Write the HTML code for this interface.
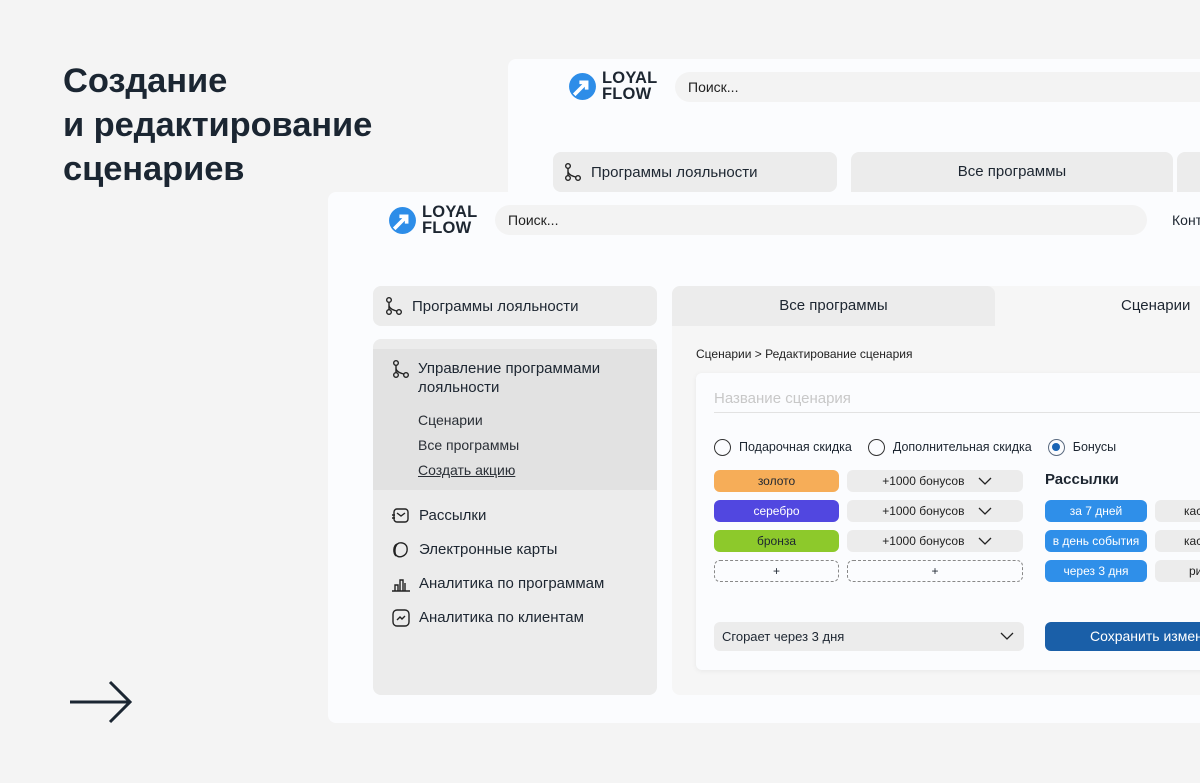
<!DOCTYPE html>
<html><head><meta charset="utf-8"><style>
*{box-sizing:border-box;margin:0;padding:0}
body{width:1200px;height:783px;overflow:hidden;background:#f4f4f4;font-family:"Liberation Sans","DejaVu Sans",sans-serif;color:#1d2631;position:relative}
.a{position:absolute}
h1{position:absolute;left:63px;top:59px;font-size:34.5px;line-height:44px;font-weight:600;color:#1b2632;letter-spacing:-0.1px}
.panel{background:#fbfcfe;border-radius:8px}
.search{background:#f3f3f3;border-radius:16px;font-size:14px;padding-left:13px;line-height:30px;color:#222}
.logo{display:flex;align-items:center;gap:5px}
.logo .t{font-size:16.5px;font-weight:700;line-height:16px;letter-spacing:0.2px;color:#1d2631}
.card{background:#ececec;border-radius:8px;font-size:15px}
.row{display:flex;align-items:center;gap:8px}
.pill{position:absolute;height:22px;border-radius:6px;font-size:12px;text-align:center;line-height:22px}
.g{background:#ececec;color:#222}
.b{background:#2f8fe9;color:#fff}
.dash{border:1px dashed #888;background:none;line-height:20px}
.radio{display:inline-block;width:17px;height:17px;border:1.5px solid #333;border-radius:50%;vertical-align:middle;margin-right:8px;position:relative}
</style></head><body>
<h1>Создание<br>и редактирование<br>сценариев</h1>
<svg class="a" style="left:68px;top:680px" width="66" height="44" viewBox="0 0 66 44"><path d="M2 22H62M42 2L62 22L42 42" stroke="#1b2632" stroke-width="3" fill="none"/></svg>

<!-- back panel -->
<div class="a panel" style="left:508px;top:59px;width:720px;height:140px"></div>
<div class="a logo" style="left:568px;top:70px"><svg width="29" height="29" viewBox="0 0 28 28"><circle cx="14" cy="14" r="13" fill="#2d8de8"/><path d="M6 22L17 11M11 10H18V17" stroke="#fff" stroke-width="3.5" fill="none"/></svg><div class="t">LOYAL<br>FLOW</div></div>
<div class="a search" style="left:675px;top:72px;width:540px;height:30px">Поиск...</div>
<div class="a card row" style="left:553px;top:152px;width:284px;height:40px;padding-left:10px;background:#ececec"><svg width="20" height="20" viewBox="0 0 20 20" fill="none" stroke="#222" stroke-width="1.4"><circle cx="5" cy="4" r="2.3"/><circle cx="5" cy="16" r="2.3"/><circle cx="15" cy="16" r="2.3"/><path d="M5 6.3V13.7M5 9Q5 13 12.7 15"/></svg>Программы лояльности</div>
<div class="a card" style="left:851px;top:152px;width:322px;height:40px;text-align:center;line-height:40px;border-radius:8px 8px 0 0">Все программы</div>
<div class="a card" style="left:1177px;top:152px;width:40px;height:40px;border-radius:8px 8px 0 0"></div>

<!-- front panel -->
<div class="a panel" style="left:328px;top:192px;width:900px;height:531px"></div>
<div class="a logo" style="left:388px;top:204px"><svg width="29" height="29" viewBox="0 0 28 28"><circle cx="14" cy="14" r="13" fill="#2d8de8"/><path d="M6 22L17 11M11 10H18V17" stroke="#fff" stroke-width="3.5" fill="none"/></svg><div class="t">LOYAL<br>FLOW</div></div>
<div class="a search" style="left:495px;top:205px;width:652px;height:30px">Поиск...</div>
<div class="a" style="left:1172px;top:212px;font-size:14px">Конт</div>

<div class="a card row" style="left:373px;top:286px;width:284px;height:40px;padding-left:11px"><svg width="20" height="20" viewBox="0 0 20 20" fill="none" stroke="#222" stroke-width="1.4"><circle cx="5" cy="4" r="2.3"/><circle cx="5" cy="16" r="2.3"/><circle cx="15" cy="16" r="2.3"/><path d="M5 6.3V13.7M5 9Q5 13 12.7 15"/></svg>Программы лояльности</div>

<div class="a card" style="left:373px;top:339px;width:284px;height:356px;overflow:hidden">
 <div style="background:#e2e2e2;height:141px;margin-top:10px;padding:10px 0 0 18px;position:relative">
  <svg class="a" style="left:18px;top:10px" width="20" height="20" viewBox="0 0 20 20" fill="none" stroke="#222" stroke-width="1.4"><circle cx="5" cy="4" r="2.3"/><circle cx="5" cy="16" r="2.3"/><circle cx="15" cy="16" r="2.3"/><path d="M5 6.3V13.7M5 9Q5 13 12.7 15"/></svg>
  <div style="margin-left:27px;line-height:19px">Управление программами<br>лояльности</div>
  <div style="margin-left:27px;font-size:14px;line-height:25px;margin-top:11px;color:#2a2f36">Сценарии<br>Все программы<br><span style="text-decoration:underline">Создать акцию</span></div>
 </div>
 <div style="padding:9px 0 0 18px;line-height:34px">
  <div class="row" style="gap:8px"><svg width="20" height="18" viewBox="0 0 20 18" fill="none" stroke="#222" stroke-width="1.4"><rect x="3" y="2" width="14" height="13" rx="3"/><path d="M6 6L10 9L14 6M1 8H4M1 11H4"/></svg>Рассылки</div>
  <div class="row"><svg width="20" height="18" viewBox="0 0 20 18" fill="none" stroke="#222" stroke-width="1.4"><path d="M8 2C13 1 17 4 16 10C15 15 9 17 6 15C3 13 3 4 8 2Z"/><path d="M6 3C2 5 2 12 5 15"/></svg>Электронные карты</div>
  <div class="row"><svg width="20" height="18" viewBox="0 0 20 18" fill="none" stroke="#222" stroke-width="1.4"><path d="M1 16H19M4 16V10H7V16M9 16V5H12V16M14 16V8"/></svg>Аналитика по программам</div>
  <div class="row"><svg width="20" height="18" viewBox="0 0 20 18" fill="none" stroke="#222" stroke-width="1.4"><rect x="2" y="1" width="16" height="16" rx="4"/><path d="M6 11L9 8L11 10L14 7"/></svg>Аналитика по клиентам</div>
 </div>
</div>

<div class="a" style="left:672px;top:286px;width:560px;height:409px;background:#f6f6f6;border-radius:8px 0 0 8px"></div>
<div class="a card" style="left:672px;top:286px;width:323px;height:40px;text-align:center;line-height:40px;border-radius:8px 8px 0 0">Все программы</div>
<div class="a" style="left:1121px;top:297px;font-size:15px">Сценарии</div>
<div class="a" style="left:696px;top:347px;font-size:12px;color:#222">Сценарии &gt; Редактирование сценария</div>

<div class="a" style="left:696px;top:373px;width:520px;height:297px;background:#fbfcfe;border-radius:6px;box-shadow:0 1px 6px rgba(0,0,0,0.06)"></div>
<div class="a" style="left:714px;top:390px;font-size:15px;color:#c8c8c8">Название сценария</div>
<div class="a" style="left:714px;top:412px;width:500px;height:1px;background:#e2e2e2"></div>
<div class="a" style="left:714px;top:438px;font-size:12.5px;line-height:18px;white-space:nowrap">
 <span class="radio"></span>Подарочная скидка<span style="display:inline-block;width:16px"></span><span class="radio"></span>Дополнительная скидка<span style="display:inline-block;width:16px"></span><span class="radio" style="border-color:#5b6b80"><span style="position:absolute;left:3px;top:3px;width:8px;height:8px;border-radius:50%;background:#1a64b4"></span></span>Бонусы
</div>
<div class="pill" style="left:714px;top:470px;width:125px;background:#f6ad58">золото</div>
<div class="pill" style="left:714px;top:500px;width:125px;background:#5147e0;color:#fff">серебро</div>
<div class="pill" style="left:714px;top:530px;width:125px;background:#8dc92b">бронза</div>
<div class="pill dash" style="left:714px;top:560px;width:125px">+</div>
<div class="pill g" style="left:847px;top:470px;width:176px">+1000 бонусов &nbsp;&nbsp;&nbsp;&nbsp;&nbsp;&nbsp;</div>
<div class="pill g" style="left:847px;top:500px;width:176px">+1000 бонусов &nbsp;&nbsp;&nbsp;&nbsp;&nbsp;&nbsp;</div>
<div class="pill g" style="left:847px;top:530px;width:176px">+1000 бонусов &nbsp;&nbsp;&nbsp;&nbsp;&nbsp;&nbsp;</div>
<div class="pill dash" style="left:847px;top:560px;width:176px">+</div>
<svg class="a" style="left:978px;top:477px" width="14" height="70" viewBox="0 0 14 70" fill="none" stroke="#222" stroke-width="1.3"><path d="M1 1L7 7L13 1M1 31L7 37L13 31M1 61L7 67L13 61"/></svg>
<div class="a" style="left:1045px;top:471px;font-size:15px;font-weight:600">Рассылки</div>
<div class="pill b" style="left:1045px;top:500px;width:102px">за 7 дней</div>
<div class="pill b" style="left:1045px;top:530px;width:102px">в день события</div>
<div class="pill b" style="left:1045px;top:560px;width:102px">через 3 дня</div>
<div class="pill g" style="left:1155px;top:500px;width:60px;text-align:left;padding-left:29px">кас</div>
<div class="pill g" style="left:1155px;top:530px;width:60px;text-align:left;padding-left:29px">кас</div>
<div class="pill g" style="left:1155px;top:560px;width:60px;text-align:left;padding-left:34px">ри</div>
<div class="a" style="left:714px;top:622px;width:310px;height:29px;background:#ececec;border-radius:6px;font-size:13px;line-height:29px;padding-left:8px">Сгорает через 3 дня</div>
<svg class="a" style="left:1000px;top:632px" width="14" height="9" viewBox="0 0 14 9" fill="none" stroke="#222" stroke-width="1.3"><path d="M1 1L7 7L13 1"/></svg>
<div class="a" style="left:1045px;top:622px;width:180px;height:29px;background:#1a5fa8;border-radius:6px;color:#fff;font-size:14px;line-height:29px;padding-left:45px;white-space:nowrap">Сохранить изменения</div>
</body></html>
